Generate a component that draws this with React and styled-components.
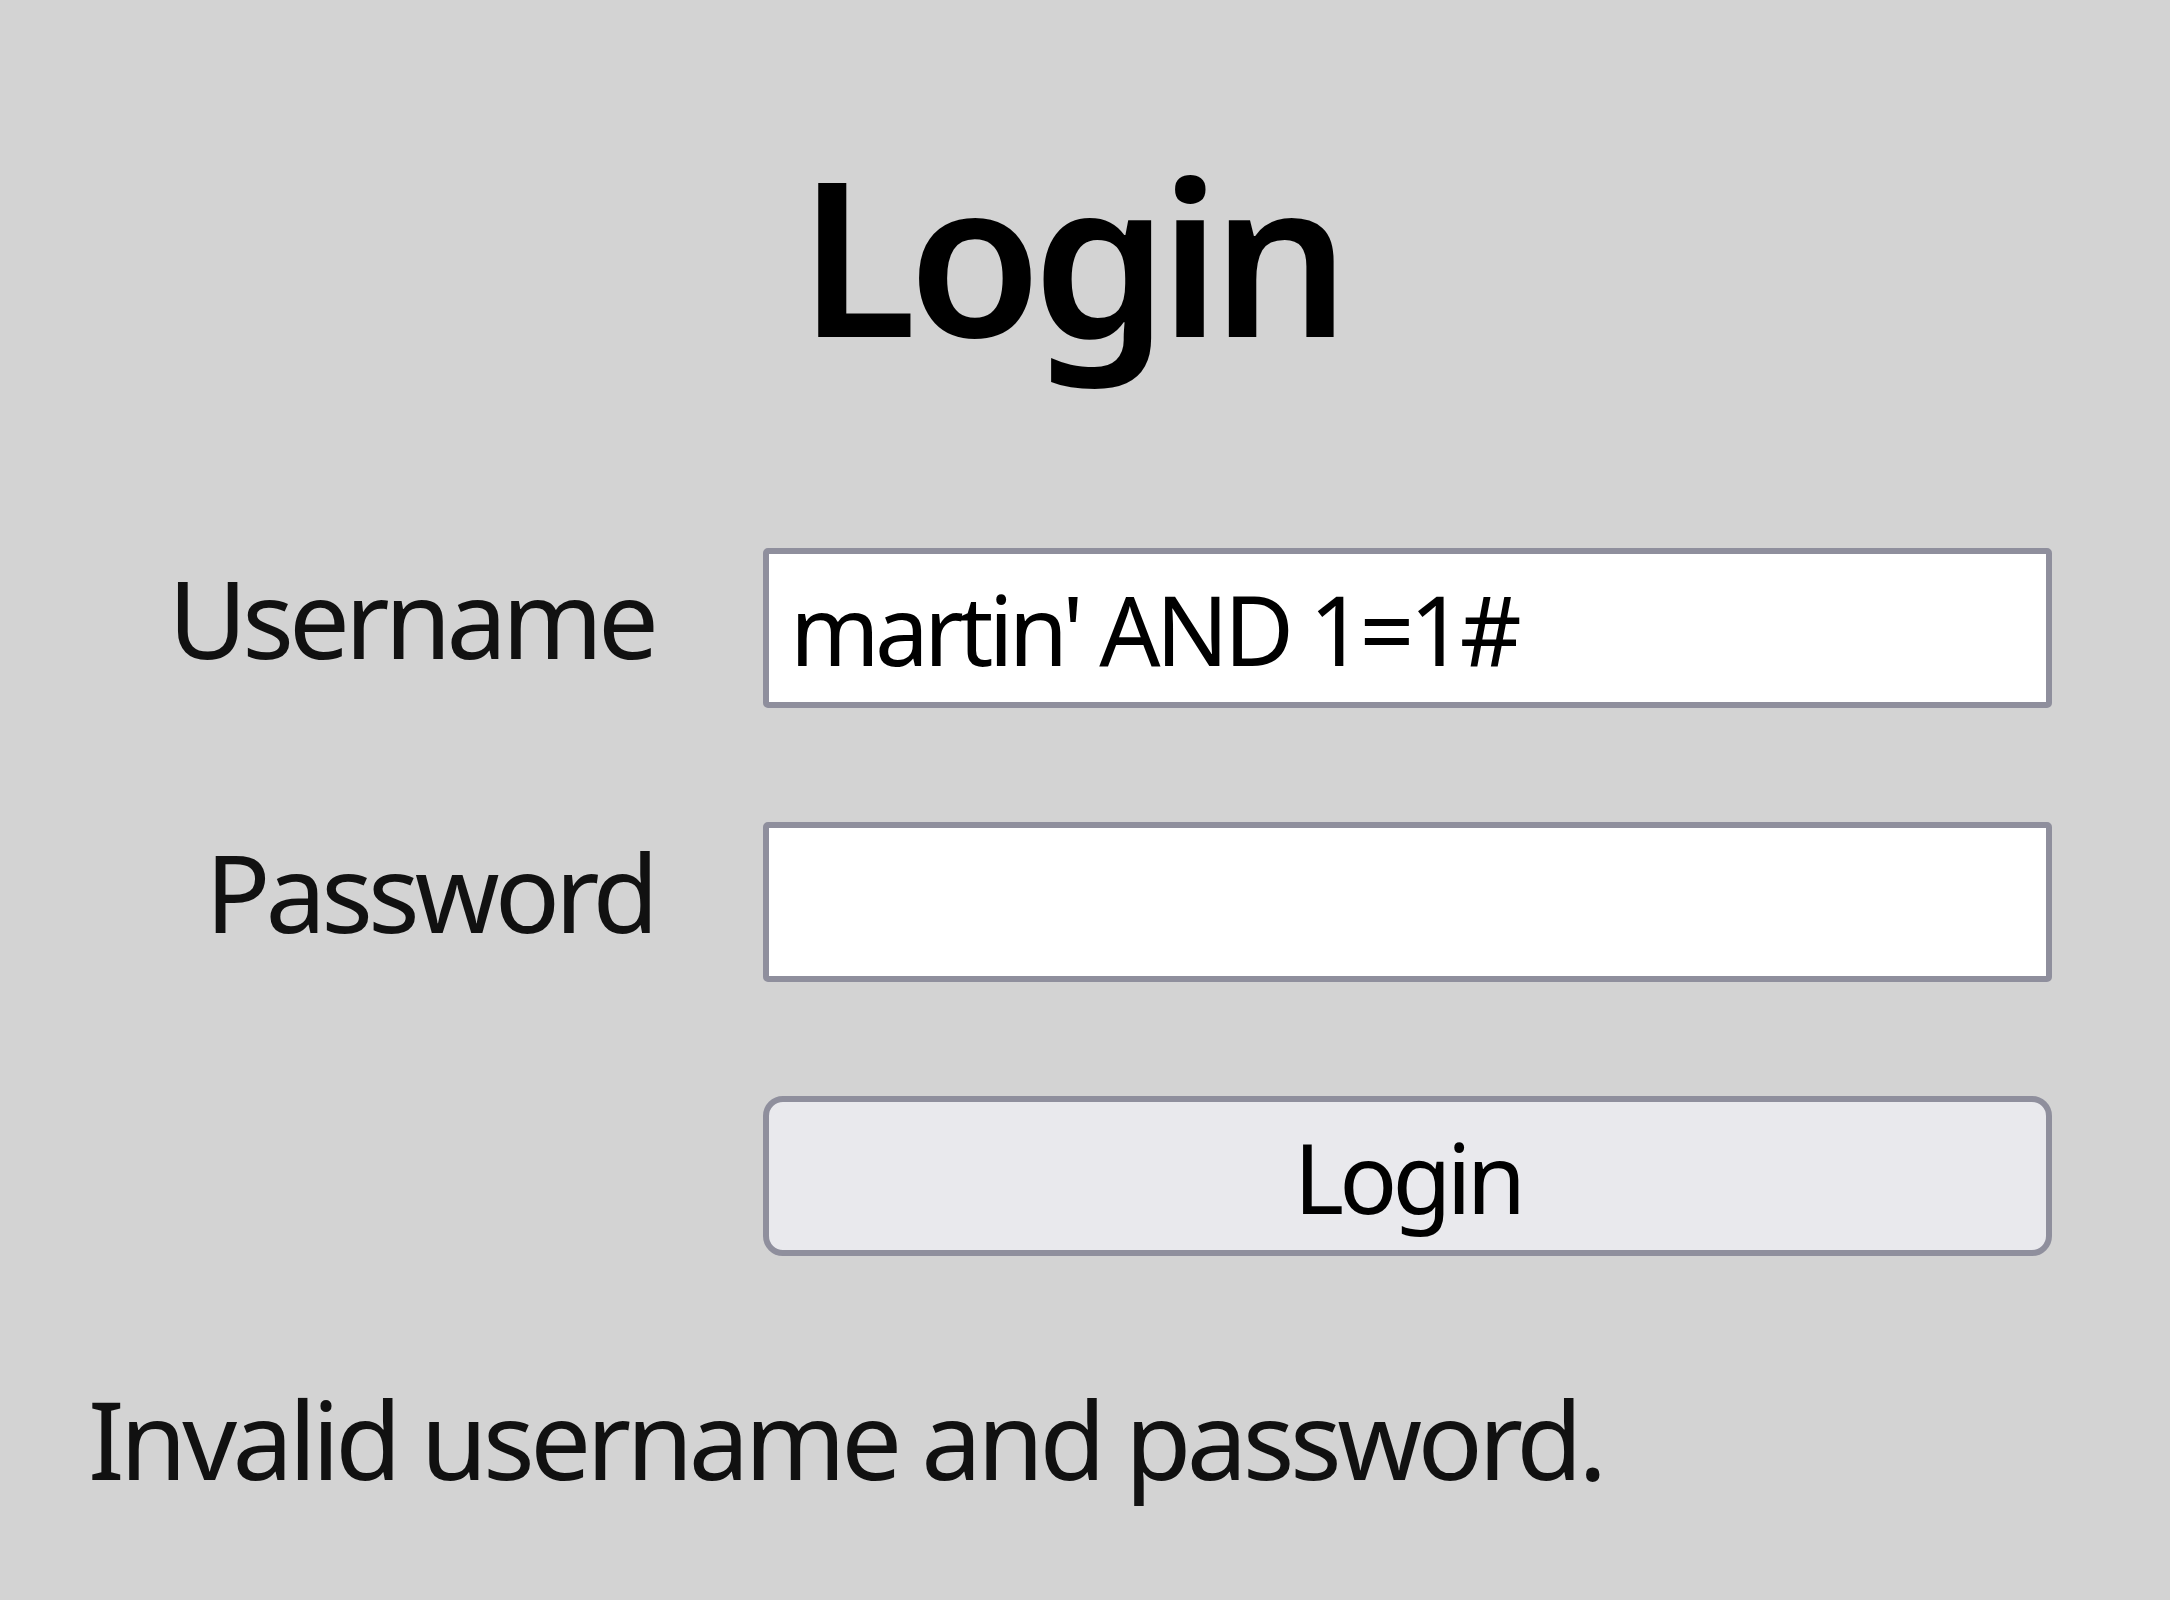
import React from "react";
import styled, { createGlobalStyle } from "styled-components";

const GlobalStyle = createGlobalStyle`
  html, body {
    margin: 0;
    padding: 0;
    background: #d3d3d3;
  }
  body {
    font-family: "Noto Sans", "Open Sans", sans-serif;
    color: #000;
  }
`;

const Page = styled.div`
  min-height: 1600px;
  box-sizing: border-box;
  padding: 145px 118px 0 88px;
`;

const Title = styled.h1`
  margin: 0;
  font-size: 216px;
  line-height: 1;
  font-weight: 600;
  letter-spacing: -0.04em;
  text-align: center;
`;

const LoginForm = styled.form`
  display: grid;
  grid-template-columns: 566px 1289px;
  column-gap: 109px;
  row-gap: 114px;
  margin-top: 187px;
  align-items: start;
`;

const Label = styled.label`
  font-size: 108px;
  line-height: 1;
  letter-spacing: -0.046em;
  text-align: right;
  padding-top: 16px;
  color: #111;
`;

const Field = styled.input`
  box-sizing: border-box;
  height: 160px;
  width: 100%;
  margin: 0;
  padding: 0 21px;
  border: 6px solid #8f8f9d;
  border-radius: 5px;
  background: #fff;
  font-family: inherit;
  font-size: 96px;
  letter-spacing: -0.05em;
  color: #000;
  outline: none;
`;

const SubmitButton = styled.button`
  grid-column: 2;
  box-sizing: border-box;
  height: 160px;
  width: 100%;
  margin: 0;
  border: 6px solid #8f8f9d;
  border-radius: 20px;
  background: #e9e9ed;
  font-family: inherit;
  font-size: 96px;
  letter-spacing: -0.05em;
  color: #000;
  padding: 0;
`;

const ErrorText = styled.p`
  margin: 129px 0 0;
  font-size: 108px;
  line-height: 1;
  letter-spacing: -0.042em;
  color: #111;
`;

export default function App() {
  return (
    <>
      <GlobalStyle />
      <Page>
        <Title>Login</Title>
        <LoginForm onSubmit={(e) => e.preventDefault()}>
          <Label htmlFor="username">Username</Label>
          <Field id="username" type="text" defaultValue="martin' AND 1=1#" />
          <Label htmlFor="password">Password</Label>
          <Field id="password" type="password" />
          <SubmitButton type="submit">Login</SubmitButton>
        </LoginForm>
        <ErrorText>Invalid username and password.</ErrorText>
      </Page>
    </>
  );
}
